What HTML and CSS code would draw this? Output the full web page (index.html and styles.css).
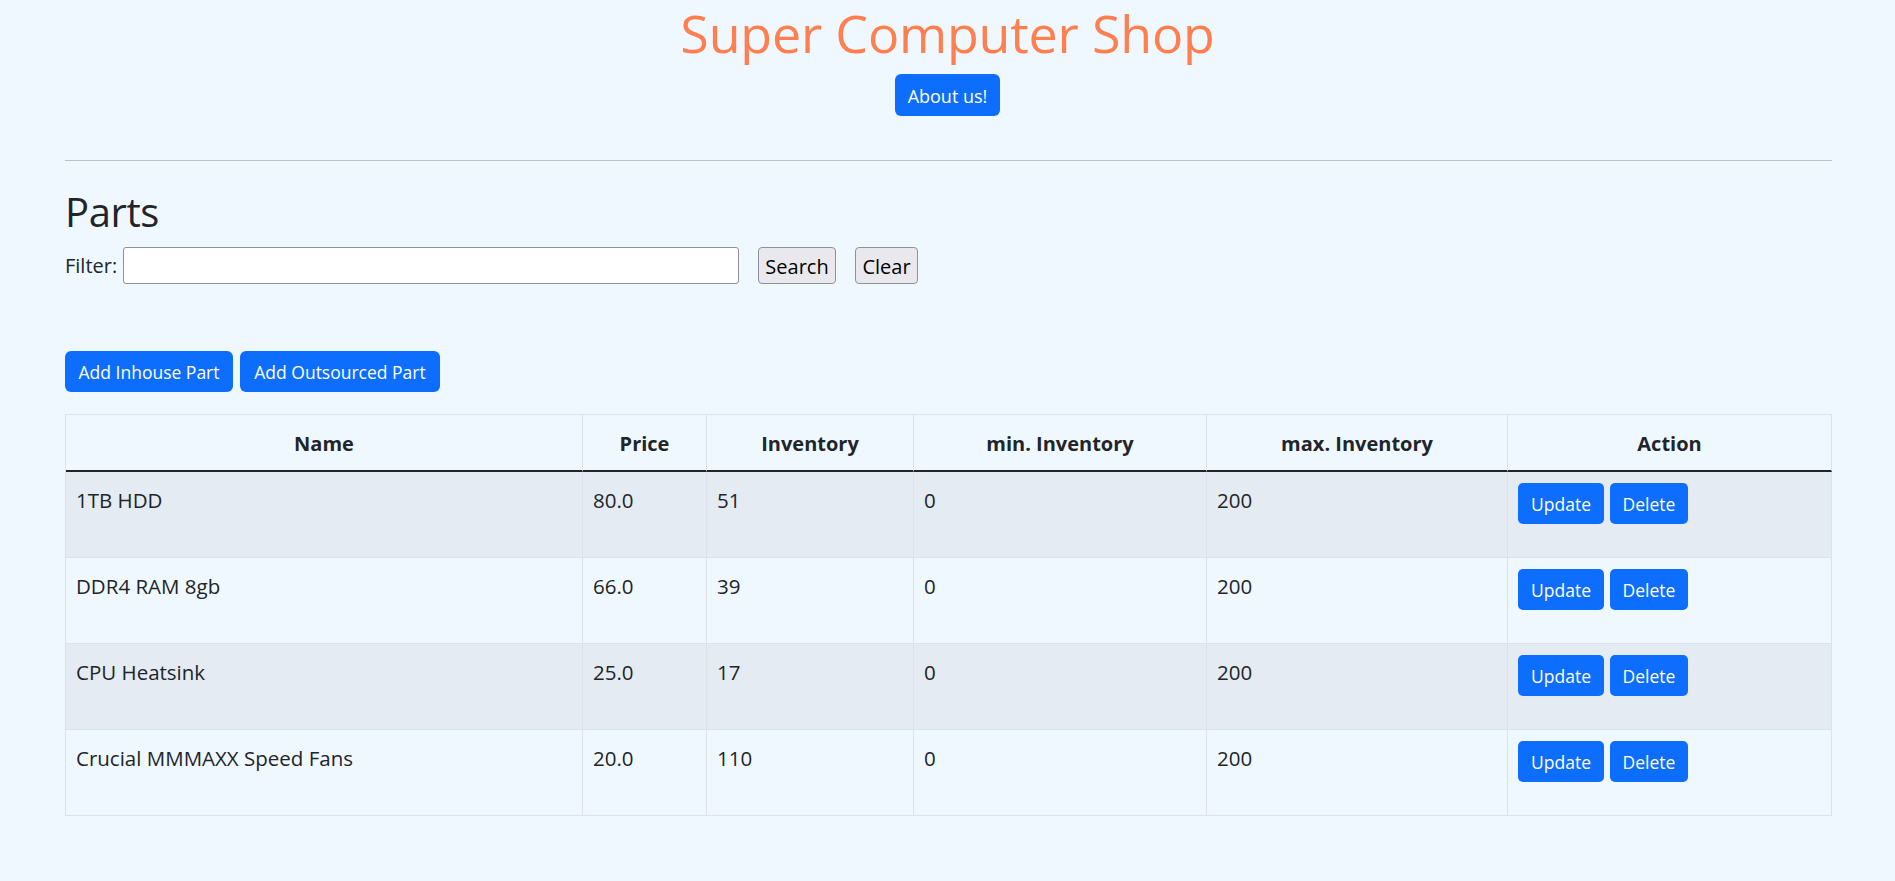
FILE: index.html
```html
<!DOCTYPE html>
<html lang="en">
<head>
<meta charset="utf-8">
<title>Super Computer Shop</title>
<link rel="stylesheet" href="styles.css">
</head>
<body>
<header class="site-header">
  <h1 class="site-title">Super Computer Shop</h1>
  <a class="btn btn-primary btn-about" href="#">About us!</a>
</header>
<main class="container">
  <hr class="divider">
  <h2 class="section-title">Parts</h2>
  <form class="filter-form">
    <label class="filter-label" for="filter">Filter:</label>
    <input class="filter-input" id="filter" type="text">
    <button class="btn-native btn-search" type="button">Search</button>
    <button class="btn-native btn-clear" type="button">Clear</button>
  </form>
  <div class="add-actions">
    <a class="btn btn-primary btn-add-inhouse" href="#">Add Inhouse Part</a>
    <a class="btn btn-primary btn-add-outsourced" href="#">Add Outsourced Part</a>
  </div>
  <table class="parts-table">
    <colgroup>
      <col class="col-name"><col class="col-price"><col class="col-inv"><col class="col-min"><col class="col-max"><col class="col-action">
    </colgroup>
    <thead>
      <tr>
        <th>Name</th><th>Price</th><th>Inventory</th><th>min. Inventory</th><th>max. Inventory</th><th>Action</th>
      </tr>
    </thead>
    <tbody>
      <tr class="striped">
        <td>1TB HDD</td><td>80.0</td><td>51</td><td>0</td><td>200</td>
        <td class="action-cell"><div class="row-actions"><a class="btn btn-primary btn-update" href="#">Update</a><a class="btn btn-primary btn-delete" href="#">Delete</a></div></td>
      </tr>
      <tr>
        <td>DDR4 RAM 8gb</td><td>66.0</td><td>39</td><td>0</td><td>200</td>
        <td class="action-cell"><div class="row-actions"><a class="btn btn-primary btn-update" href="#">Update</a><a class="btn btn-primary btn-delete" href="#">Delete</a></div></td>
      </tr>
      <tr class="striped">
        <td>CPU Heatsink</td><td>25.0</td><td>17</td><td>0</td><td>200</td>
        <td class="action-cell"><div class="row-actions"><a class="btn btn-primary btn-update" href="#">Update</a><a class="btn btn-primary btn-delete" href="#">Delete</a></div></td>
      </tr>
      <tr>
        <td>Crucial MMMAXX Speed Fans</td><td>20.0</td><td>110</td><td>0</td><td>200</td>
        <td class="action-cell"><div class="row-actions"><a class="btn btn-primary btn-update" href="#">Update</a><a class="btn btn-primary btn-delete" href="#">Delete</a></div></td>
      </tr>
    </tbody>
  </table>
</main>
</body>
</html>
```

FILE: styles.css
```css
* { box-sizing: border-box; }

html, body {
  margin: 0;
  padding: 0;
}

body {
  background: #f0f8ff;
  color: #212529;
  font-family: "Open Sans", "Noto Sans", sans-serif;
  font-size: 20px;
}

.site-header {
  text-align: center;
}

.site-title {
  margin: 0;
  font-size: 52px;
  font-weight: 400;
  line-height: 66px;
  letter-spacing: -0.2px;
  color: #ff7f50;
}

.btn {
  display: inline-flex;
  align-items: center;
  justify-content: center;
  padding-top: 2px;
  text-decoration: none;
  font-size: 17.5px;
  line-height: 1;
  border-radius: 6px;
}

.btn-primary {
  background: #0d6efd;
  color: #ffffff;
}

.btn-about {
  margin-top: 8px;
  width: 105px;
  height: 42px;
  font-size: 18px;
}

.container {
  padding: 0 63px 0 65px;
}

.divider {
  margin: 44px 0 0;
  border: 0;
  border-top: 1px solid #bcc3c9;
  height: 0;
}

.section-title {
  margin: 27px 0 0;
  font-size: 40px;
  font-weight: 400;
  line-height: 48px;
  letter-spacing: -0.4px;
}

.filter-form {
  margin-top: 11px;
  display: flex;
  align-items: center;
  height: 37px;
}

.filter-label {
  width: 58px;
  font-size: 20px;
}

.filter-input {
  width: 616px;
  height: 37px;
  margin: 0;
  background: #ffffff;
  border: 1px solid #8f8f9d;
  border-radius: 3px;
}

.btn-native {
  height: 37px;
  margin: 0 0 0 19px;
  padding: 2px 0 0;
  font-family: "Open Sans", "Noto Sans", sans-serif;
  font-size: 20px;
  color: #000000;
  background: #e9e9ed;
  border: 1px solid #8f8f9d;
  border-radius: 4px;
}

.btn-search { width: 78px; }
.btn-clear { width: 63px; }

.add-actions {
  margin-top: 67px;
  display: flex;
  gap: 7px;
}

.add-actions .btn {
  height: 41px;
}

.btn-add-inhouse { width: 168px; }
.btn-add-outsourced { width: 200px; }

.parts-table {
  margin-top: 22px;
  width: 1767px;
  table-layout: fixed;
  border-collapse: separate;
  border-spacing: 0;
  border-top: 1px solid #dee2e6;
  border-left: 1px solid #dee2e6;
}

.col-name { width: 517px; }
.col-price { width: 124px; }
.col-inv { width: 207px; }
.col-min { width: 293px; }
.col-max { width: 301px; }
.col-action { width: 324px; }

.parts-table th,
.parts-table td {
  border-right: 1px solid #dee2e6;
  border-bottom: 1px solid #dee2e6;
  vertical-align: top;
  padding: 0 10px;
}

.parts-table thead tr { height: 57px; }

.parts-table th {
  padding-top: 14px;
  font-size: 20px;
  font-weight: 700;
  line-height: 30px;
  text-align: center;
  border-bottom: 2px solid #212529;
}

.parts-table tbody tr { height: 86px; }

.parts-table td {
  padding-top: 13px;
  font-size: 20.5px;
  line-height: 31px;
}

.parts-table tr.striped td {
  background: #e4ebf2;
}

.parts-table td.action-cell {
  padding-top: 11px;
}

.row-actions {
  display: flex;
  gap: 6px;
}

.row-actions .btn {
  height: 41px;
  border-radius: 5px;
}

.btn-update { width: 86px; }
.btn-delete { width: 78px; }
```
